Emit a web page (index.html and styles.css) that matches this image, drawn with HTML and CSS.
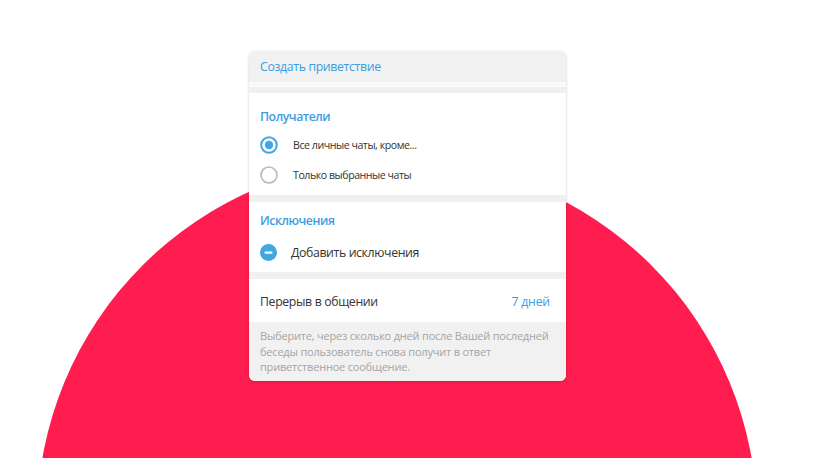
FILE: index.html
```html
<!DOCTYPE html>
<html lang="ru">
<head>
<meta charset="utf-8">
<title>Приветствие</title>
<link rel="stylesheet" href="styles.css">
</head>
<body>
<div class="stage">
  <div class="blob"></div>
  <div class="card">
    <div class="head">Создать приветствие</div>
    <div class="gap-top"></div>
    <div class="section s1">
      <div class="title">Получатели</div>
      <div class="radio-row">
        <svg class="radio" width="18" height="18" viewBox="0 0 18 18"><circle cx="9" cy="9" r="7.8" fill="none" stroke="#40a7e3" stroke-width="2"/><circle cx="9" cy="9" r="4.2" fill="#40a7e3"/></svg>
        <span class="rlabel">Все личные чаты, кроме...</span>
      </div>
      <div class="radio-row">
        <svg class="radio" width="18" height="18" viewBox="0 0 18 18"><circle cx="9" cy="9" r="8" fill="none" stroke="#b9b9b9" stroke-width="1.6"/></svg>
        <span class="rlabel">Только выбранные чаты</span>
      </div>
    </div>
    <div class="sep"></div>
    <div class="section s2">
      <div class="title">Исключения</div>
      <div class="add-row">
        <svg class="minus" width="17" height="17" viewBox="0 0 17 17"><circle cx="8.5" cy="8.5" r="8.5" fill="#40a7e3"/><rect x="4.5" y="7.5" width="8" height="2.2" rx="1" fill="#fff"/></svg>
        <span class="alabel">Добавить исключения</span>
      </div>
    </div>
    <div class="sep"></div>
    <div class="section s3">
      <span class="plabel">Перерыв в общении</span>
      <span class="pvalue">7 дней</span>
    </div>
    <div class="foot">Выберите, через сколько дней после Вашей последней беседы пользователь снова получит в ответ приветственное сообщение.</div>
  </div>
</div>
</body>
</html>
```
FILE: styles.css
```css
html, body {
  margin: 0;
  padding: 0;
  background: #ffffff;
}
body {
  font-family: "Open Sans", "Noto Sans", sans-serif;
  color: #333333;
}
.stage {
  position: relative;
  width: 815px;
  height: 458px;
  overflow: hidden;
  padding-top: 51px;
  box-sizing: border-box;
}
.blob {
  position: absolute;
  left: 37px;
  top: 160px;
  width: 720px;
  height: 720px;
  border-radius: 50%;
  background: #ff1d50;
}
.card {
  position: relative;
  width: 317px;
  margin: 0 auto;
  background: #ffffff;
  border-radius: 6px;
  overflow: hidden;
  box-shadow: 0 1px 3px rgba(0,0,0,0.2);
}
.head {
  height: 31px;
  background: #f1f1f1;
  color: #3d9de0;
  font-size: 12.3px;
  letter-spacing: -0.35px;
  line-height: 31px;
  padding-left: 11px;
}
.gap-top {
  height: 5px;
  background: #fafafa;
  border-bottom: 6px solid #f0f0f0;
}
.section {
  background: #fff;
  padding-left: 11px;
  padding-right: 16px;
}
.title {
  color: #3d9de0;
  font-size: 12.3px;
  font-weight: 600;
  letter-spacing: -0.45px;
  line-height: 16px;
}
.s1 { padding-top: 16px; height: 86px; }
.s1 .title { margin-bottom: 5px; }
.radio-row {
  display: flex;
  align-items: center;
  height: 30px;
}
.radio { margin-right: 15px; flex: none; }
.rlabel { font-size: 10.6px; letter-spacing: -0.45px; color: #333; }
.sep { height: 7px; background: #f0f0f0; }
.s2 { padding-top: 11px; height: 59px; }
.s2 .title { margin-bottom: 9px; }
.add-row {
  display: flex;
  align-items: center;
  height: 28px;
}
.minus { margin-right: 14px; flex: none; }
.alabel { font-size: 12.3px; letter-spacing: -0.38px; color: #333; }
.s3 {
  height: 43px;
  display: flex;
  align-items: center;
  justify-content: space-between;
  padding-top: 1px;
  box-sizing: border-box;
}
.plabel { font-size: 12.3px; letter-spacing: -0.36px; color: #333; }
.pvalue { font-size: 12.3px; letter-spacing: -0.2px; color: #3d9de0; }
.foot {
  background: #f1f1f1;
  color: #a5a5a5;
  font-size: 11px;
  letter-spacing: -0.2px;
  line-height: 15.5px;
  padding: 6px 6px 6px 11px;
}
```
